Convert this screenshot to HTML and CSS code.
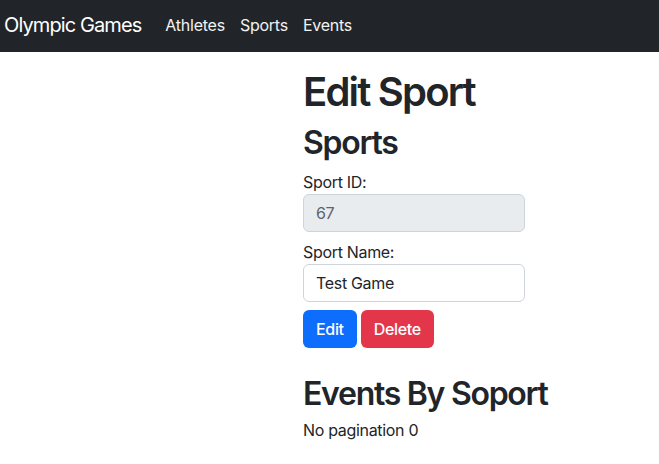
FILE: index.html
```html
<!DOCTYPE html>
<html lang="en">
<head>
<meta charset="utf-8">
<title>Edit Sport</title>
<link rel="stylesheet" href="styles.css">
</head>
<body>
<nav class="navbar">
  <a class="brand" href="#">Olympic Games</a>
  <ul class="nav">
    <li><a href="#">Athletes</a></li>
    <li><a href="#">Sports</a></li>
    <li><a href="#">Events</a></li>
  </ul>
</nav>
<main class="main">
  <div class="col">
    <h1 class="title">Edit Sport</h1>
    <h2 class="subtitle">Sports</h2>
    <form class="form">
      <div class="field">
        <label class="label" for="sid">Sport ID:</label>
        <input class="input" id="sid" type="text" value="67" disabled>
      </div>
      <div class="field">
        <label class="label" for="sname">Sport Name:</label>
        <input class="input" id="sname" type="text" value="Test Game">
      </div>
      <div class="actions">
        <button class="btn btn-primary" type="button">Edit</button>
        <button class="btn btn-danger" type="button">Delete</button>
      </div>
    </form>
    <h2 class="section">Events By Soport</h2>
    <p class="note">No pagination 0</p>
  </div>
</main>
</body>
</html>
```
FILE: styles.css
```css
* { box-sizing: border-box; }
html, body { margin: 0; padding: 0; }
body {
  font-family: Inter, "Liberation Sans", sans-serif;
  font-size: 16px;
  line-height: 1.5;
  letter-spacing: -0.02em;
  color: #212529;
  background: #fff;
}
.navbar {
  display: flex;
  align-items: center;
  height: 52px;
  background: #212529;
  padding: 0 4px 3px;
}
.brand {
  color: #fff;
  font-size: 20px;
  letter-spacing: -0.045em;
  text-decoration: none;
  margin-right: 24px;
}
.nav {
  display: flex;
  gap: 15px;
  list-style: none;
  margin: 0;
  padding: 0;
}
.nav a {
  color: #f2f2f2;
  text-decoration: none;
  font-size: 16px;
  letter-spacing: -0.015em;
}
.main {
  padding-left: 303px;
  padding-top: 16px;
}
.col { width: 222px; }
.title {
  font-size: 40px;
  font-weight: 600;
  line-height: 1.2;
  letter-spacing: -0.045em;
  margin: 0 0 8px;
  white-space: nowrap;
}
.subtitle, .section {
  font-size: 32px;
  font-weight: 600;
  line-height: 1.2;
  letter-spacing: -0.04em;
  margin: 0 0 8px;
  white-space: nowrap;
}
.section { margin-top: 27px; margin-bottom: 4px; }
.form { display: flex; flex-direction: column; gap: 8px; }
.field { display: flex; flex-direction: column; }
.label { display: block; }
.input {
  width: 222px;
  height: 38px;
  padding: 6px 12px;
  font: inherit;
  letter-spacing: inherit;
  color: #212529;
  border: 1px solid #ced4da;
  border-radius: 6px;
  background: #fff;
}
.input:disabled { background: #e9ecef; color: #5c636a; }
.actions { display: flex; gap: 4px; }
.btn {
  height: 38px;
  padding: 6px 12px;
  font: inherit;
  font-weight: 500;
  letter-spacing: -0.02em;
  color: #fff;
  border: 1px solid transparent;
  border-radius: 6px;
}
.btn-primary { background: #0d6efd; }
.btn-danger { background: #e4364a; }
.note { margin: 0; }
```
